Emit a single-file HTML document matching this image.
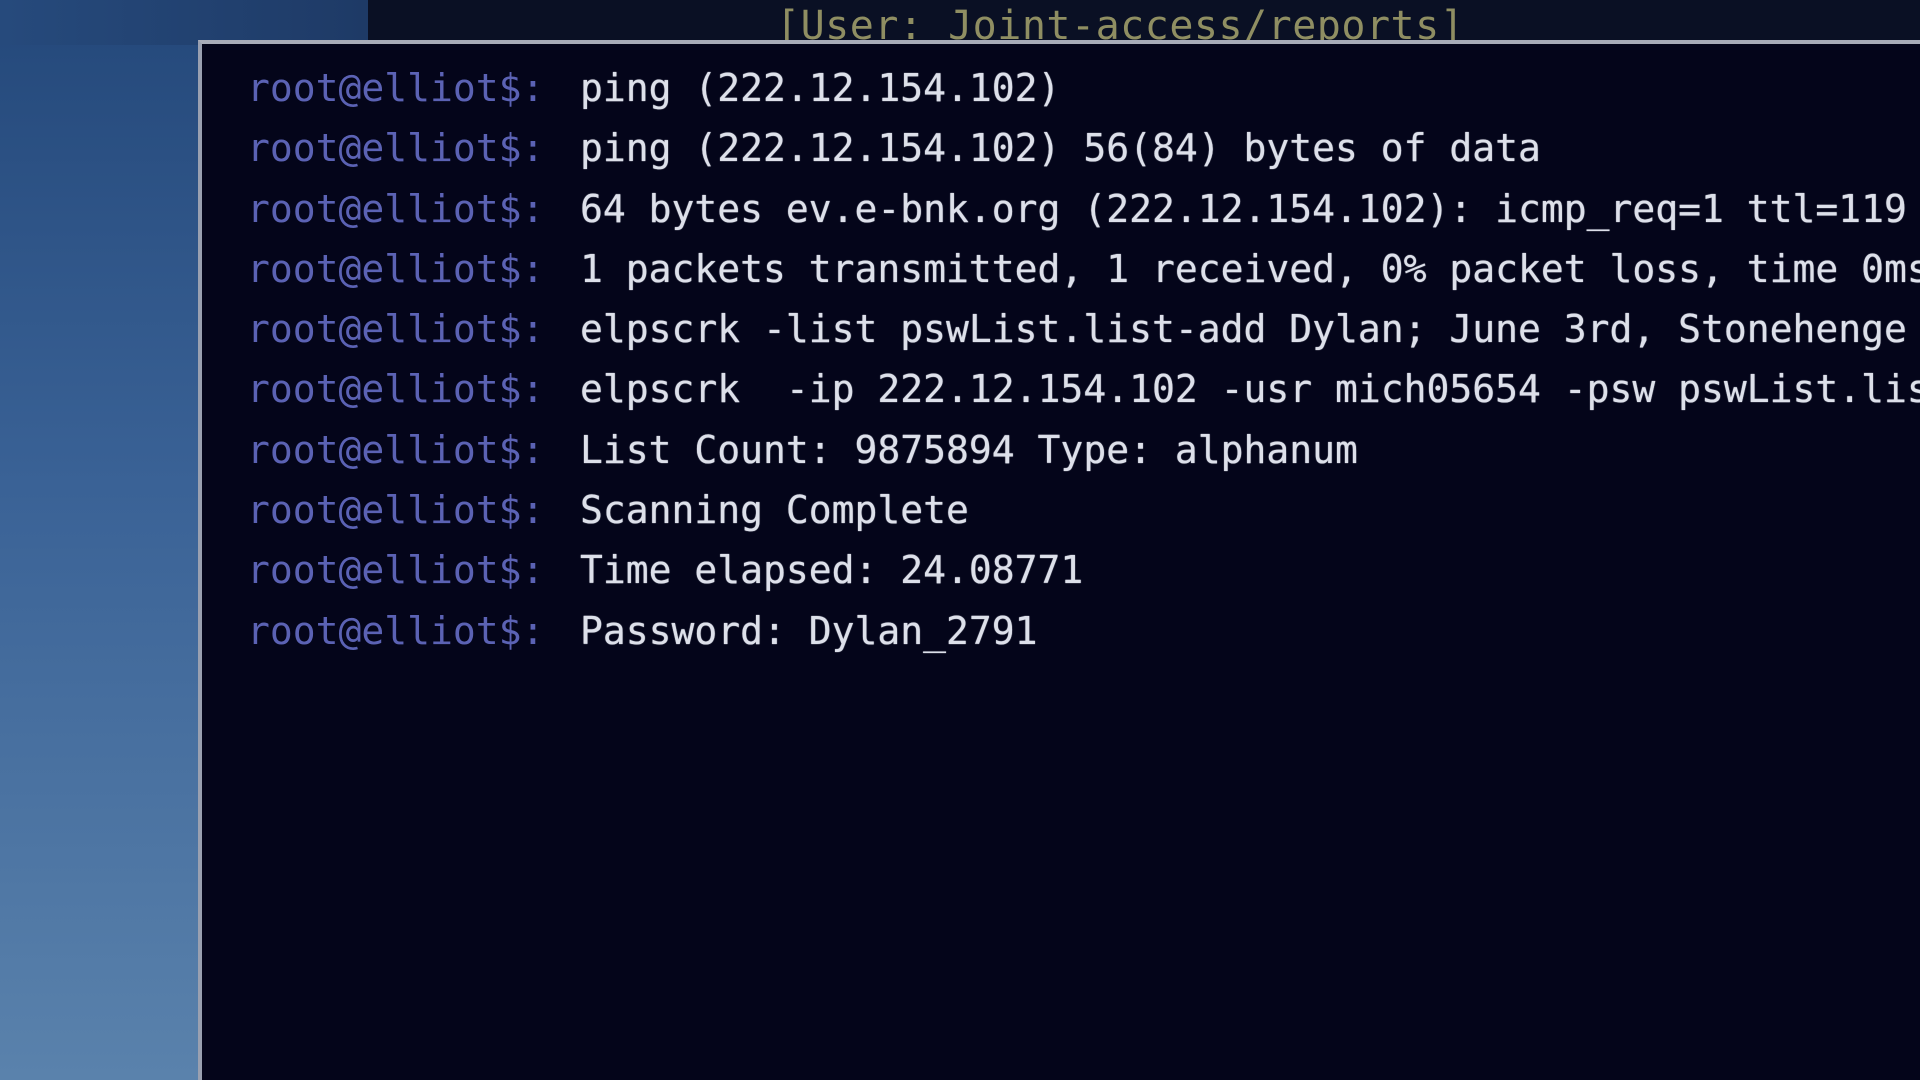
<!DOCTYPE html>
<html><head><meta charset="utf-8"><style>
html,body{margin:0;padding:0;width:1920px;height:1080px;overflow:hidden;background:#0b1226;position:relative;}
.left{position:absolute;left:0;top:0;width:205px;height:1080px;background:linear-gradient(180deg,#24487a 0%,#3a6296 45%,#5a82ac 100%);}
.topblue{position:absolute;left:0;top:0;width:368px;height:45px;background:linear-gradient(90deg,#264a7c,#1e3a66);}
.topdark{position:absolute;left:368px;top:0;width:1552px;height:45px;background:#0a1024;}
.title{position:absolute;left:776px;top:3px;font-family:"DejaVu Sans Mono","Liberation Mono",monospace;font-size:40px;color:#8f8e62;white-space:pre;letter-spacing:0.5px;}
.win{position:absolute;left:198px;top:40px;width:1722px;height:1040px;background:#04051a;border-left:4px solid #9aa0b0;border-top:4px solid #a8acb8;box-sizing:border-box;}
.lines{position:absolute;left:0;top:58px;width:1920px;font-family:"DejaVu Sans Mono","Liberation Mono",monospace;font-size:38px;line-height:60.3px;}
.l{position:relative;height:60.3px;}
.p{position:absolute;left:247px;color:#5b62b4;white-space:pre;}
.c{position:absolute;left:580px;color:#dde0ea;white-space:pre;text-shadow:0 0 1px #dde0ea;}
</style></head><body>
<div class="left"></div>
<div class="topblue"></div>
<div class="topdark"></div>
<div class="title">[User: Joint-access/reports]</div>
<div class="win"></div>
<div class="lines"><div class="l"><span class="p">root@elliot$:</span><span class="c">ping (222.12.154.102)</span></div><div class="l"><span class="p">root@elliot$:</span><span class="c">ping (222.12.154.102) 56(84) bytes of data</span></div><div class="l"><span class="p">root@elliot$:</span><span class="c">64 bytes ev.e-bnk.org (222.12.154.102): icmp_req=1 ttl=119</span></div><div class="l"><span class="p">root@elliot$:</span><span class="c">1 packets transmitted, 1 received, 0% packet loss, time 0ms</span></div><div class="l"><span class="p">root@elliot$:</span><span class="c">elpscrk -list pswList.list-add Dylan; June 3rd, Stonehenge</span></div><div class="l"><span class="p">root@elliot$:</span><span class="c">elpscrk  -ip 222.12.154.102 -usr mich05654 -psw pswList.list</span></div><div class="l"><span class="p">root@elliot$:</span><span class="c">List Count: 9875894 Type: alphanum</span></div><div class="l"><span class="p">root@elliot$:</span><span class="c">Scanning Complete</span></div><div class="l"><span class="p">root@elliot$:</span><span class="c">Time elapsed: 24.08771</span></div><div class="l"><span class="p">root@elliot$:</span><span class="c">Password: Dylan_2791</span></div></div>
</body></html>
